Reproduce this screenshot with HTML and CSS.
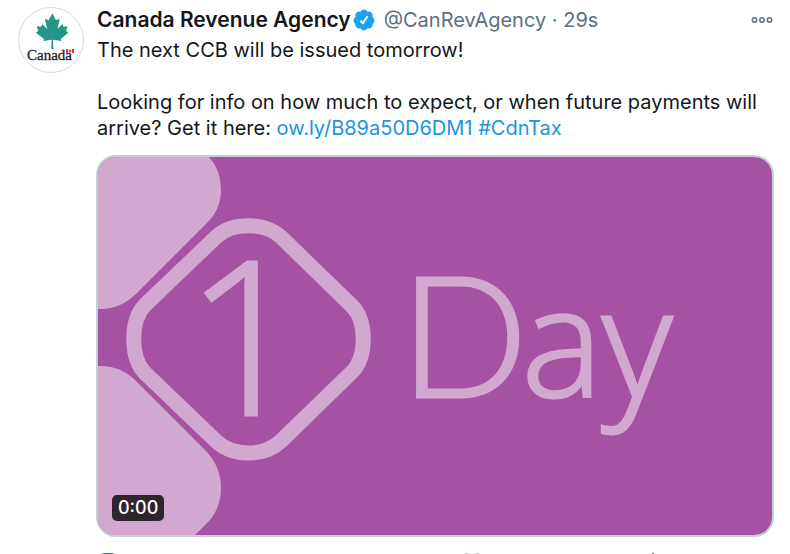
FILE: index.html
```html
<!DOCTYPE html>
<html lang="en">
<head>
<meta charset="utf-8">
<title>Canada Revenue Agency</title>
<link rel="stylesheet" href="styles.css">
</head>
<body>
<article class="post">
  <a class="avatar" href="#" aria-label="Canada Revenue Agency profile">
    <svg viewBox="0 0 66 66" aria-hidden="true">
      <circle class="avatar-ring" cx="33" cy="33" r="32.5"/>
      <path class="leaf" transform="translate(-18 -7) scale(.3333)" d="M157 40L168 61L179 56L173 87L187 72L191 80L203 79L198 92L205 98L182 117L184 123L159 119L160 147H154L155 119L130 123L132 117L108 98L115 92L110 79L123 80L127 72L141 87L135 56L146 61Z"/>
      <text class="wordmark" x="9" y="53">Canada</text>
      <path class="flag" d="M48 42h2v4h-2zM54 42h2v4h-2zM52 42l1.500 2-1.500 2-1.500-2z"/>
    </svg>
  </a>
  <div class="content">
    <header class="post-header">
      <a class="name" href="#">Canada Revenue Agency</a>
      <svg class="badge" viewBox="0 0 24 24" role="img" aria-label="Verified account">
        <path d="M22.500 12.500c0-1.580-.875-2.950-2.148-3.600.154-.435.238-.905.238-1.400 0-2.210-1.710-3.998-3.818-3.998-.47 0-.92.084-1.336.250C14.818 2.415 13.510 1.500 12 1.500s-2.816.917-3.437 2.250c-.415-.165-.866-.250-1.336-.250-2.110 0-3.818 1.790-3.818 4 0 .494.083.964.237 1.400-1.272.650-2.147 2.018-2.147 3.600 0 1.495.782 2.798 1.942 3.486-.02.170-.032.340-.032.514 0 2.210 1.708 4 3.818 4 .47 0 .92-.086 1.335-.250.620 1.334 1.926 2.250 3.437 2.250 1.512 0 2.818-.916 3.437-2.250.415.163.865.248 1.336.248 2.110 0 3.818-1.790 3.818-4 0-.174-.012-.344-.033-.513 1.158-.687 1.943-1.990 1.943-3.484z"/>
        <path class="check" d="M8.300 12.600l2.500 2.600 4.700-7"/>
      </svg>
      <span class="meta"><a class="handle" href="#">@CanRevAgency</a> · <time>29s</time></span>
      <button class="more" type="button" aria-label="More">
        <svg viewBox="0 0 24 24" aria-hidden="true"><circle cx="4.500" cy="12" r="2.200"/><circle cx="12" cy="12" r="2.200"/><circle cx="19.500" cy="12" r="2.200"/></svg>
      </button>
    </header>
    <div class="text">
      <p>The next CCB will be issued tomorrow!</p>
      <p>Looking for info on how much to expect, or when future payments will arrive? Get it here: <a href="#">ow.ly/B89a50D6DM1</a> <a href="#">#CdnTax</a></p>
    </div>
    <div class="media">
      <svg class="frame" viewBox="0 0 674 378" role="img" aria-label="1 Day">
        <path class="tint" d="M0 0H111Q123 13 123 33Q123 52 109 66L39 136Q22 153 0 152Z"/>
        <path class="tint" d="M0 209Q20 208 35 221L107 293Q123 309 123 331Q123 352 109 366L97 378H0Z"/>
        <path class="diamond" d="M47 148L118 80C134 65 167 65 183 80L254 149C269 164 269 200 254 215L183 284C166 300 135 300 118 284L47 216C32 201 32 163 47 148Z"/>
        <text class="digit" x="87" y="258">1</text>
        <text class="word" x="302" y="240">D<tspan class="lower" dx="-6">ay</tspan></text>
      </svg>
      <span class="timer">0:00</span>
    </div>
    <footer class="actions">
      <button type="button" aria-label="Reply"><svg viewBox="0 0 24 24"><path d="M9 2h6a7 7 0 0 1 0 14l-5 5v-5H9A7 7 0 0 1 9 2z"/></svg></button>
      <button type="button" aria-label="Repost"><svg viewBox="0 0 24 24"><path d="M2 10l4-4 4 4M6 6v12h8M22 14l-4 4-4-4M18 18V6h-8"/></svg></button>
      <button type="button" aria-label="Like"><svg viewBox="0 0 24 24"><path d="M12 21C4 15 2 12 2 8c0-7 8-7 10-2 2-5 10-5 10 2 0 4-2 7-10 13z"/></svg></button>
      <button type="button" aria-label="Share"><svg viewBox="0 0 24 24"><path d="M7 7l5-5 5 5M12 2v13M3 14v7h18v-7"/></svg></button>
    </footer>
  </div>
</article>
</body>
</html>
```
FILE: styles.css
```css
* {
  box-sizing: border-box;
}

body {
  margin: 0;
  height: 100vh;
  overflow: hidden;
  background: #fff;
  color: #14171a;
  font: 20px/26px Inter, "Liberation Sans", sans-serif;
}

a {
  color: #1b95e0;
  text-decoration: none;
}

button {
  padding: 0;
  border: 0;
  background: none;
}

svg {
  display: block;
}

.post {
  display: flex;
  gap: 12px;
  padding: 7px 16px 0 18px;
}

.avatar {
  flex: 0 0 66px;
  height: 66px;
}

.avatar-ring {
  fill: #fff;
  stroke: #d5d8da;
}

.leaf {
  fill: #25958c;
}

.wordmark {
  fill: #222;
  stroke: #222;
  stroke-width: 0.3;
  font: 15px "Liberation Serif", serif;
}

.flag {
  fill: #e8303a;
}

.content {
  flex: 1;
  min-width: 0;
}

.post-header {
  display: flex;
  align-items: center;
  height: 26px;
  padding-left: 1px;
  white-space: nowrap;
}

.name {
  color: #14171a;
  font-size: 21px;
  font-weight: 600;
}

.badge {
  width: 24px;
  height: 24px;
  margin: 0 8px 0 1px;
  fill: #1da1f2;
}

.check {
  fill: none;
  stroke: #fff;
  stroke-width: 2;
}

.meta,
.handle {
  color: #5b7083;
}

.more {
  margin-left: auto;
}

.more svg {
  width: 24px;
  height: 24px;
  fill: none;
  stroke: #5b7083;
  stroke-width: 1.5;
}

.text {
  padding: 4px 0 14px 1px;
}

.text p {
  margin: 0 0 26px;
}

.text p:last-child {
  margin: 0;
}

.media {
  position: relative;
  overflow: hidden;
  border: 2px solid #c4cfd6;
  border-radius: 20px;
  background: #a652a2;
}

.frame {
  width: 100%;
}

.tint,
.digit,
.word {
  fill: #d2a8d1;
}

.diamond {
  fill: none;
  stroke: #d2a8d1;
  stroke-width: 15;
}

.digit,
.word {
  font-weight: 300;
  stroke: #d2a8d1;
  stroke-width: 3;
}

.digit {
  font-family: "Open Sans", "Noto Sans", sans-serif;
  font-size: 214px;
}

.word {
  font-family: Lato, "Open Sans", sans-serif;
  font-size: 168px;
}

.lower {
  font-family: "Open Sans", "Noto Sans", sans-serif;
  font-size: 152px;
}

.timer {
  position: absolute;
  left: 14px;
  bottom: 14px;
  padding: 0 6px;
  border-radius: 5px;
  background: #30242f;
  color: #fff;
  font-size: 18px;
  font-weight: 500;
}

.actions {
  display: flex;
  justify-content: space-between;
  width: 84%;
  padding-top: 15px;
}

.actions svg {
  width: 24px;
  height: 24px;
  fill: none;
  stroke: #5b7083;
  stroke-width: 2;
}
```
